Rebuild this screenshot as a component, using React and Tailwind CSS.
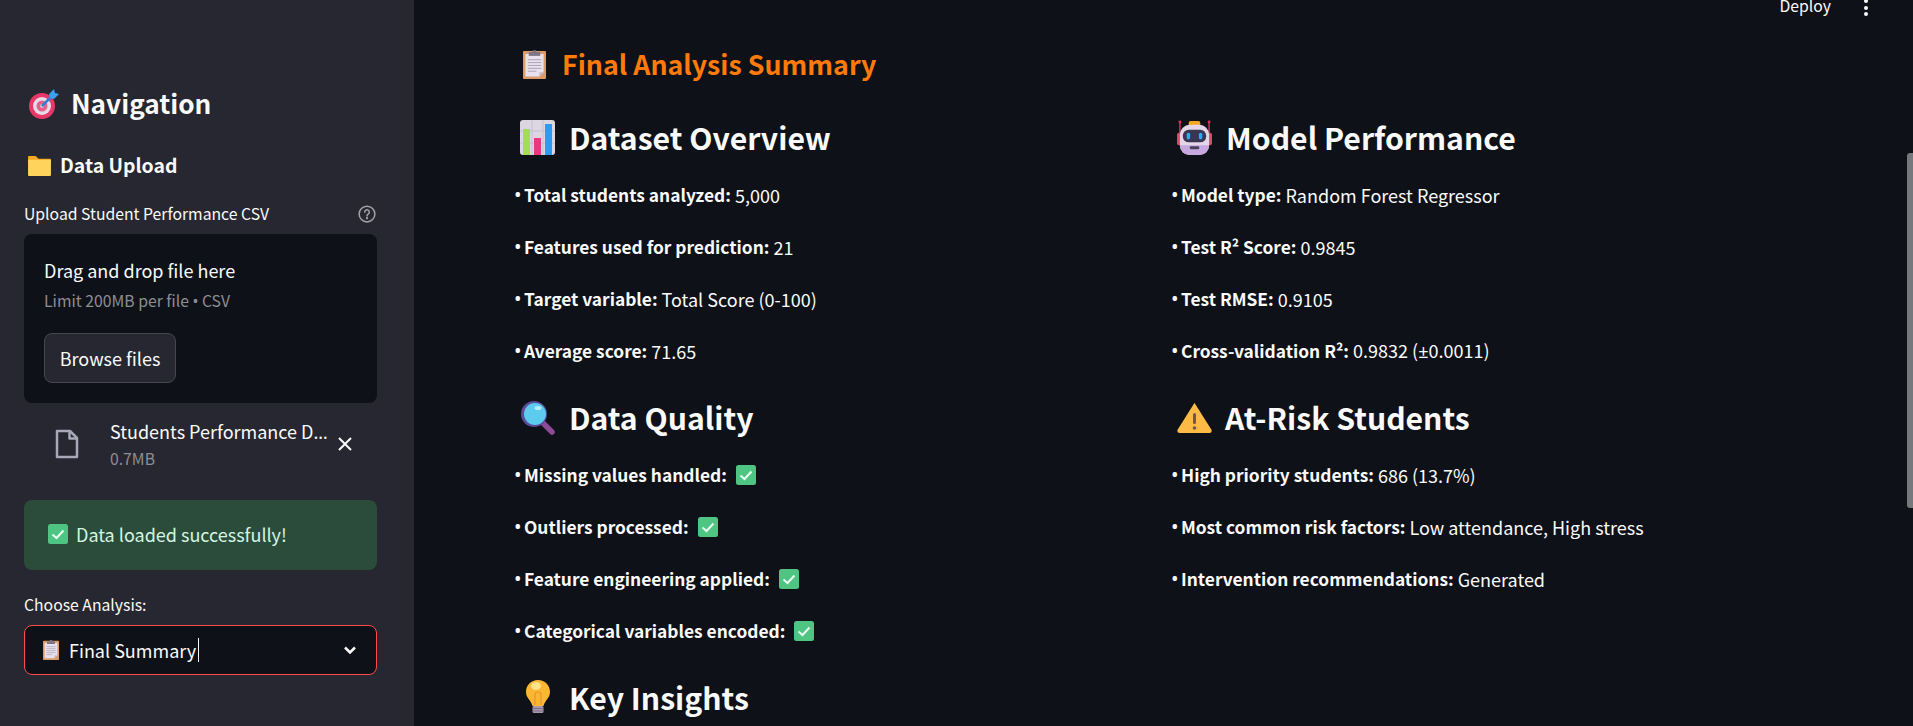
// Emoji drawings, all on small square grids
function TargetIcon({ className }) {
  return (
    <svg viewBox="0 0 32 32" className={className}>
      <circle cx="14" cy="18" r="13" fill="#e8386a" />
      <circle cx="14" cy="18" r="9" fill="#e6dce8" />
      <circle cx="14" cy="18" r="5.5" fill="#e8608a" />
      <circle cx="14" cy="18" r="2" fill="#c9c0d0" />
      <path d="M14 18 L25 7" stroke="#2f7fd8" strokeWidth="2.5" />
      <path d="M21 6 L26 1 L27 5 L31 6 L26 11 L22 10 Z" fill="#3aa0f0" />
    </svg>
  );
}

function FolderIcon({ className }) {
  return (
    <svg viewBox="0 0 24 22" className={className}>
      <path d="M0 2 a1 1 0 0 1 1-1 h7 l3 3 h12 a1 1 0 0 1 1 1 v4 H0 Z" fill="#f5a623" />
      <path d="M0 5 h24 v16 a1 1 0 0 1-1 1 H1 a1 1 0 0 1-1-1 Z" fill="#ffd35c" />
    </svg>
  );
}

function ClipboardIcon({ className }) {
  return (
    <svg viewBox="0 0 24 30" className={className}>
      <rect x="0" y="1" width="24" height="29" rx="1" fill="#dc9a68" />
      <path d="M2.5 4 H21.5 V23 L17 27.5 H2.5 Z" fill="#e8e2f0" />
      <path d="M17 27.5 V23 H21.5 Z" fill="#c2b8cc" />
      <rect x="6" y="2" width="12" height="4" fill="#7d7585" />
      <rect x="10" y="0" width="4" height="3" rx="1" fill="#7d7585" />
      <path d="M5 10 H19 M5 13 H19 M5 16 H19 M5 19 H19 M5 22 H14" stroke="#a8a0b0" strokeWidth="1" />
    </svg>
  );
}

function ChartIcon({ className }) {
  return (
    <svg viewBox="0 0 35 35" className={className}>
      <rect width="35" height="35" rx="3" fill="#dcd6e2" />
      <path d="M12 0 V35 M23 0 V35 M0 11 H35 M0 23 H35" stroke="#c6bfce" strokeWidth="1" />
      <rect x="3" y="9" width="7" height="26" fill="#a4dc58" />
      <rect x="14" y="18" width="7" height="17" fill="#e8387e" />
      <rect x="25" y="4" width="7" height="31" fill="#2f9bf0" />
    </svg>
  );
}

function RobotIcon({ className }) {
  return (
    <svg viewBox="0 0 36 36" className={className}>
      <path d="M3 1 V14 M33 1 V14" stroke="#c9365a" strokeWidth="1.5" />
      <circle cx="3" cy="2" r="1.5" fill="#f0285a" />
      <circle cx="33" cy="2" r="1.5" fill="#f0285a" />
      <rect x="0" y="13" width="5" height="13" rx="2" fill="#e0486a" />
      <rect x="31" y="13" width="5" height="13" rx="2" fill="#e0486a" />
      <rect x="12" y="1" width="12" height="6" rx="2" fill="#f5a623" />
      <rect x="3" y="5" width="30" height="31" rx="10" fill="#e4d6e8" />
      <path d="M3 26 a10 10 0 0 0 10 10 h10 a10 10 0 0 0 10-10 Z" fill="#c8a8e0" />
      <rect x="6" y="10" width="24" height="13" rx="6" fill="#3a3550" />
      <rect x="10" y="13" width="3.5" height="7" rx="1.75" fill="#2fa8f0" />
      <rect x="22.5" y="13" width="3.5" height="7" rx="1.75" fill="#2fa8f0" />
      <rect x="13" y="27" width="10" height="3" rx="1.5" fill="#4a4258" />
    </svg>
  );
}

function MagnifierIcon({ className }) {
  return (
    <svg viewBox="0 0 35 35" className={className}>
      <path d="M22 22 L32 32" stroke="#8e4a96" strokeWidth="5.5" strokeLinecap="round" />
      <circle cx="14" cy="14" r="13" fill="#5b4a9a" />
      <circle cx="15" cy="14" r="11" fill="#5ccbee" />
      <ellipse cx="18" cy="8" rx="3.5" ry="2" fill="#b5ecfa" />
    </svg>
  );
}

function WarningIcon({ className }) {
  return (
    <svg viewBox="0 0 35 31" className={className}>
      <path d="M17.5 1 L34.5 28 Q35 31 32 31 H3 Q0 31 .5 28 Z" fill="#fbb040" />
      <path d="M17.5 1 L34.5 28 Q35 31 32 31 H3 Q0 31 .5 28 Z" fill="#ffc94d" opacity=".45" />
      <rect x="16" y="11" width="3" height="11" rx="1.5" fill="#6b5a50" />
      <circle cx="17.5" cy="26" r="1.8" fill="#6b5a50" />
    </svg>
  );
}

function BulbIcon({ className }) {
  return (
    <svg viewBox="0 0 24 34" className={className}>
      <path d="M12 0 C5 0 0 5 0 12 C0 18 5 20 6.5 26 H17.5 C19 20 24 18 24 12 C24 5 19 0 12 0 Z" fill="#fbb733" />
      <ellipse cx="10" cy="6" rx="5" ry="4" fill="#ffe28a" />
      <path d="M9 25 V15 a3 3 0 1 1 6 0 V25" fill="none" stroke="#e8952a" strokeWidth="1.2" />
      <rect x="6.5" y="26" width="11" height="7" rx="1.5" fill="#a898b0" />
      <path d="M7 28.5 H17 M7 31 H17" stroke="#7d6f88" strokeWidth="1" />
    </svg>
  );
}

function CheckIcon({ className }) {
  return (
    <svg viewBox="0 0 20 20" className={className}>
      <rect width="20" height="20" rx="2.5" fill="#4fc584" />
      <path d="M4.5 10.5 L8.5 14 L15.5 6.5" fill="none" stroke="#eafbf2" strokeWidth="2" />
    </svg>
  );
}

// the CJK font draws these signs full width, so they get a narrower face
function Narrow({ children }) {
  return <span className="font-['Noto_Sans']">{children}</span>;
}

function SideLabel({ children }) {
  return <div className="text-[15.75px] leading-5 text-[#fafafa]">{children}</div>;
}

function SectionHeading({ icon, gap, children }) {
  return (
    <h2 className="flex h-[62px] items-center pb-[2px] pl-[6px] text-[30.2px] font-semibold leading-none text-[#fafafa]">
      <span className="flex w-[35px] shrink-0 justify-center">{icon}</span>
      <span className={gap}>{children}</span>
    </h2>
  );
}

function Bullet({ label, value, check }) {
  return (
    <div className="flex h-[52px] items-center whitespace-pre text-[18px] text-[#fafafa]">
      <span className="w-[10px] font-['Noto_Sans'] text-[20px] leading-none">•</span>
      <strong className="text-[17.35px] font-semibold">{label}</strong>
      {value && <span> {value}</span>}
      {check && <CheckIcon className="ml-[9px] h-5 w-5" />}
    </div>
  );
}

function Sidebar() {
  return (
    <aside className="flex h-full w-[414px] shrink-0 flex-col bg-[#262730] pl-6 pr-[37px]">
      <div className="mt-[84px] flex h-10 items-center pl-1 text-[26.2px] font-semibold text-[#fafafa]">
        <TargetIcon className="mr-[11px] h-8 w-8" />
        Navigation
      </div>
      <div className="mt-[27px] flex h-7 items-center pl-1 text-[19.4px] font-semibold text-[#fafafa]">
        <FolderIcon className="mr-[9px] h-[21px] w-[23px]" />
        Data Upload
      </div>
      <div className="mt-[25px] flex h-5 items-center justify-between">
        <SideLabel>Upload Student Performance CSV</SideLabel>
        <svg viewBox="0 0 24 24" className="mr-px h-[18px] w-[18px] text-[#a3a3a8]" fill="none" stroke="currentColor" strokeWidth="2">
          <circle cx="12" cy="12" r="10.5" />
          <path d="M9 9.5a3 3 0 1 1 4.5 2.6c-1 .6-1.5 1.1-1.5 2.4" strokeLinecap="round" />
          <circle cx="12" cy="17.5" r=".6" fill="currentColor" />
        </svg>
      </div>
      <div className="mt-[10px] flex h-[169px] flex-col items-start rounded-lg bg-[#0e1117] px-5 pt-6">
        <div className="text-[18px] leading-6 text-[#fafafa]">Drag and drop file here</div>
        <div className="mt-[9px] text-[15.75px] leading-5 text-[#8d8e93]">Limit 200MB per file <Narrow>•</Narrow> CSV</div>
        <button className="mt-[22px] h-[50px] w-[132px] rounded-lg border border-[#45464f] bg-[#262730] text-[18px] text-[#fafafa]">
          Browse files
        </button>
      </div>
      <div className="mt-[15px] flex h-[52px] items-center">
        <svg viewBox="0 0 24 30" className="ml-[31px] h-[30px] w-6" fill="none" stroke="#a8a9b8" strokeWidth="2.5" strokeLinejoin="round">
          <path d="M2 2 H15 L22 9 V28 H2 Z" />
          <path d="M14.5 2 V9.5 H22" />
        </svg>
        <div className="ml-[31px] w-[227px] min-w-0">
          <div className="whitespace-nowrap text-[18px] leading-6 text-[#fafafa]">Students Performance D<Narrow>…</Narrow></div>
          <div className="mt-[5px] text-[15.75px] leading-5 text-[#8d8e93]">0.7MB</div>
        </div>
        <svg viewBox="0 0 16 16" className="h-4 w-4" fill="none" stroke="#fafafa" strokeWidth="2">
          <path d="M2 2 L14 14 M14 2 L2 14" />
        </svg>
      </div>
      <div className="mt-[30px] flex h-[70px] items-center rounded-lg bg-[#2b4c3b] pb-[2px] pl-6 text-[18px] text-[#d4f5e0]">
        <CheckIcon className="mr-2 h-5 w-5" />
        Data loaded successfully!
      </div>
      <div className="mt-[25px]">
        <SideLabel>Choose Analysis:</SideLabel>
      </div>
      <div className="mt-[10px] flex h-[50px] items-center rounded-lg border border-[#ff4b4b] bg-[#0e1117] pl-[18px] pr-[16px] text-[18px] text-[#fafafa]">
        <ClipboardIcon className="mr-[10px] h-5 w-4" />
        <span>Final Summary</span>
        <span className="ml-[2px] h-6 w-px bg-[#fafafa]" />
        <svg viewBox="0 0 24 24" className="ml-auto h-5 w-5" fill="none" stroke="#fafafa" strokeWidth="3">
          <path d="M6 9 L12 15 L18 9" />
        </svg>
      </div>
    </aside>
  );
}

export default function App() {
  return (
    <div
      className="relative flex h-[726px] w-full overflow-hidden bg-[#0e1117]"
      style={{ fontFamily: '"Noto Sans CJK SC", "Noto Sans", sans-serif' }}
    >
      <Sidebar />
      <main className="min-w-0 flex-1">
        <div className="flex h-10 justify-end pr-[45px]">
          <span className="text-[15.75px] leading-3 text-[#fafafa]">Deploy</span>
          <span className="-mt-[1px] ml-[33px] flex flex-col gap-[2.5px]">
            <span className="h-1 w-1 rounded-full bg-[#fafafa]" />
            <span className="h-1 w-1 rounded-full bg-[#fafafa]" />
            <span className="h-1 w-1 rounded-full bg-[#fafafa]" />
          </span>
        </div>
        <h1 className="ml-[109px] flex h-[50px] items-center pb-[2px] text-[26.75px] font-bold text-[#ff7a0a]">
          <ClipboardIcon className="mr-[16px] h-[29px] w-[23px]" />
          Final Analysis Summary
        </h1>
        <div className="mt-[17px] grid grid-cols-[657px_1fr] pl-[100px]">
          <div>
            <SectionHeading gap="ml-[14px]" icon={<ChartIcon className="h-[35px] w-[35px]" />}>Dataset Overview</SectionHeading>
            <Bullet label="Total students analyzed:" value="5,000" />
            <Bullet label="Features used for prediction:" value="21" />
            <Bullet label="Target variable:" value="Total Score (0-100)" />
            <Bullet label="Average score:" value="71.65" />
            <div className="mt-[10px]">
              <SectionHeading gap="ml-[14px]" icon={<MagnifierIcon className="h-[35px] w-[35px]" />}>Data Quality</SectionHeading>
              <Bullet label="Missing values handled:" check />
              <Bullet label="Outliers processed:" check />
              <Bullet label="Feature engineering applied:" check />
              <Bullet label="Categorical variables encoded:" check />
            </div>
            <div className="mt-[10px]">
              <SectionHeading gap="ml-[14px]" icon={<BulbIcon className="h-[34px] w-6" />}>Key Insights</SectionHeading>
            </div>
          </div>
          <div>
            <SectionHeading gap="ml-[14px]" icon={<RobotIcon className="h-[35px] w-[35px]" />}>Model Performance</SectionHeading>
            <Bullet label="Model type:" value="Random Forest Regressor" />
            <Bullet label="Test R² Score:" value="0.9845" />
            <Bullet label="Test RMSE:" value="0.9105" />
            <Bullet label="Cross-validation R²:" value={<>0.9832 (<Narrow>±</Narrow>0.0011)</>} />
            <div className="mt-[10px]">
              <SectionHeading gap="ml-[13px]" icon={<WarningIcon className="h-[31px] w-[35px]" />}>At-Risk Students</SectionHeading>
              <Bullet label="High priority students:" value="686 (13.7%)" />
              <Bullet label="Most common risk factors:" value="Low attendance, High stress" />
              <Bullet label="Intervention recommendations:" value="Generated" />
            </div>
          </div>
        </div>
      </main>
      {/* page scrollbar thumb */}
      <div className="absolute right-0 top-[153px] h-[355px] w-[6px] rounded-l-[3px] bg-[#77787c]" />
    </div>
  );
}
